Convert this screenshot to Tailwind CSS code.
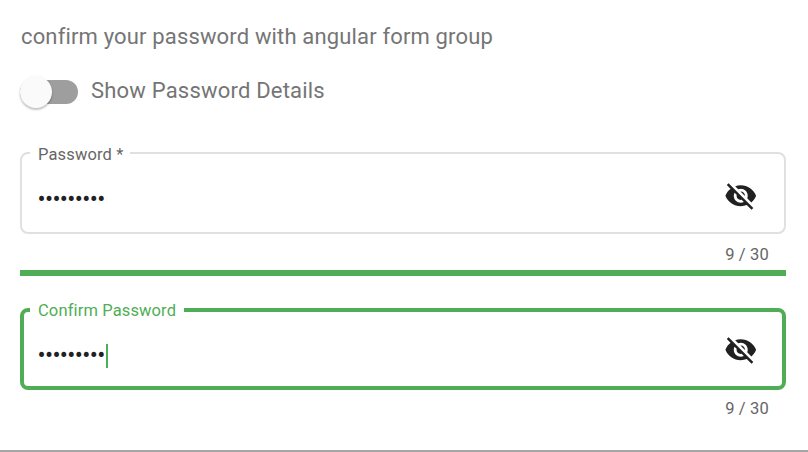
<!DOCTYPE html>
<html lang="en">
<head>
<meta charset="utf-8">
<title>Confirm password</title>
<script src="https://cdn.jsdelivr.net/npm/@tailwindcss/browser@4"></script>
</head>
<body class="bg-white font-[Roboto,sans-serif] overflow-hidden">
<svg class="hidden">
  <symbol id="visibility-off" viewBox="0 0 24 24"><path d="M12 7c2.76 0 5 2.24 5 5 0 .65-.13 1.26-.36 1.83l2.92 2.92c1.51-1.26 2.7-2.89 3.43-4.75-1.73-4.39-6-7.5-11-7.5-1.4 0-2.74.25-3.98.7l2.16 2.16C10.74 7.13 11.35 7 12 7zM2 4.27l2.28 2.28.46.46C3.08 8.3 1.78 10.02 1 12c1.73 4.39 6 7.5 11 7.5 1.55 0 3.03-.3 4.38-.84l.42.42L19.73 22 21 20.73 3.27 3 2 4.27zM7.53 9.8l1.55 1.55c-.05.21-.08.43-.08.65 0 1.66 1.34 3 3 3 .22 0 .44-.03.65-.08l1.55 1.55c-.67.33-1.41.53-2.2.53-2.76 0-5-2.24-5-5 0-.79.2-1.53.53-2.2zm4.31-.78l3.15 3.15.02-.16c0-1.66-1.34-3-3-3l-.17.01z"/></symbol>
</svg>
<main class="flex h-[452px] flex-col border-b-2 border-[#a6a6a6] pl-5 pr-[22px] pt-[23px]">
  <p class="h-7 whitespace-nowrap pl-px text-[22px] leading-7 tracking-[0.155px] text-[#757575]">confirm your password with angular form group</p>
  <label class="mt-6 flex h-[34px] items-center">
    <span class="flex h-6 w-[58px] items-center rounded-full bg-[#9e9e9e]">
      <span class="size-8 rounded-full bg-[#fafafa] shadow-[0_2px_2px_rgba(0,0,0,0.18),0_1px_3px_rgba(0,0,0,0.1)]"></span>
    </span>
    <span class="ml-[13px] -mt-[3px] whitespace-nowrap text-[22px] leading-7 tracking-[0.2px] text-[#757575]">Show Password Details</span>
  </label>

  <div class="relative mt-[43px] h-[82px] shrink-0 rounded-[8px] border-2 border-[#e0e0e0]">
    <span class="absolute left-2 -top-[9px] flex h-5 w-[100px] items-center whitespace-nowrap bg-white pl-2 text-[16.5px] tracking-[0.15px] text-[#666]">Password *</span>
    <div class="flex h-full items-center justify-between pl-[15.5px] pr-[27px]">
      <span class="flex items-center pt-[12px] text-[24px] leading-6 tracking-[-0.64px] text-[#212121]">•••••••••</span>
      <svg class="mt-[5px] size-[33.5px] fill-[#212121]"><use href="#visibility-off"/></svg>
    </div>
  </div>
  <div class="flex h-9 items-center justify-end pr-[17px] pt-[6px] text-[16.5px] tracking-[0.17px] text-[#666]">9 / 30</div>
  <div class="h-1.5 shrink-0 bg-[#4fae55]"></div>

  <div class="relative mt-8 h-[82px] shrink-0 rounded-[8px] border-4 border-[#4fae55]">
    <span class="absolute left-1.5 -top-[11px] flex h-5 w-[154px] items-center whitespace-nowrap bg-white pl-2 text-[16.5px] tracking-[0.13px] text-[#4fae55]">Confirm Password</span>
    <div class="flex h-full items-center justify-between pl-[13.5px] pr-[25px]">
      <span class="flex items-center pt-[12px] text-[24px] leading-6 tracking-[-0.64px] text-[#212121]">•••••••••<span class="ml-[1px] mt-px -mb-px h-6 w-0.5 bg-[#4fae55]"></span></span>
      <svg class="mt-[1px] size-[33.5px] fill-[#212121]"><use href="#visibility-off"/></svg>
    </div>
  </div>
  <div class="flex h-9 items-center justify-end pr-[17px] pt-[2px] text-[16.5px] tracking-[0.17px] text-[#666]">9 / 30</div>
</main>
</body>
</html>
